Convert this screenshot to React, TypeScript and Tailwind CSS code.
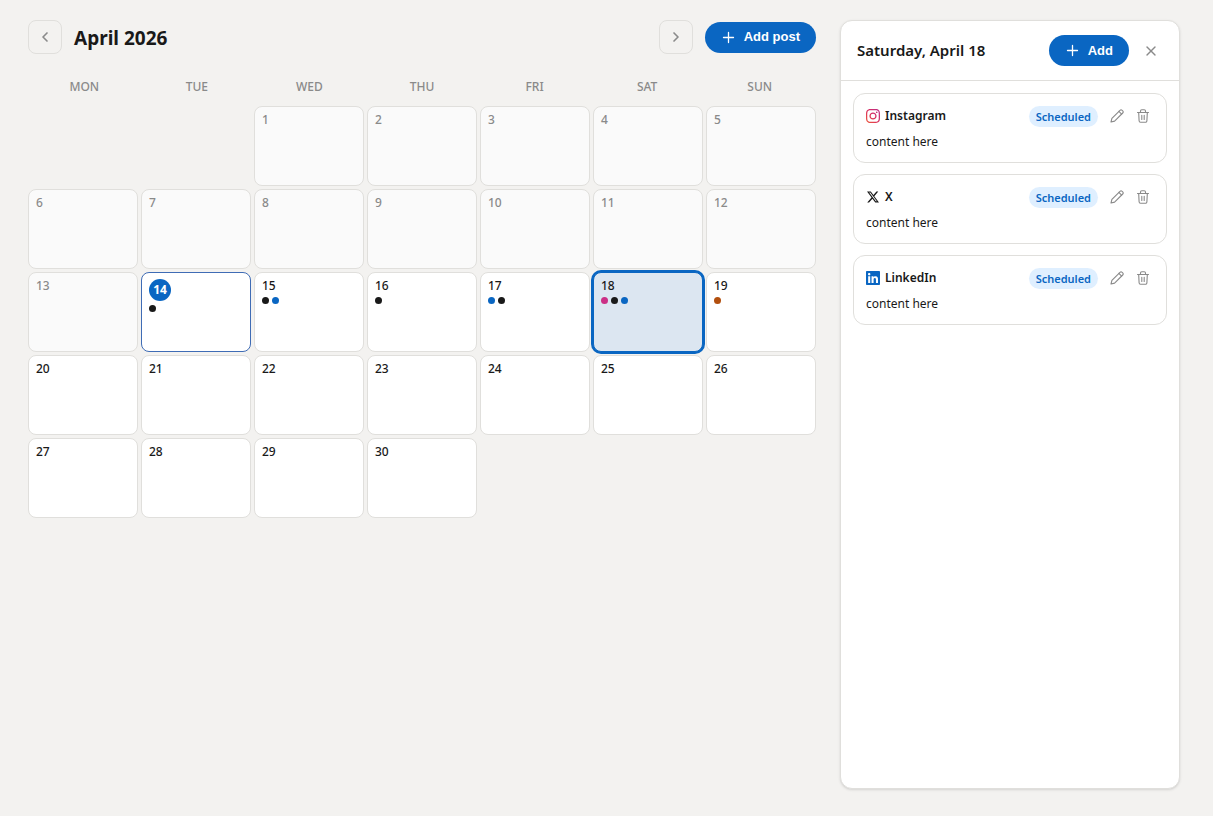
import { useState } from "react";
import { ChevronLeft, ChevronRight, X } from "lucide-react";
import { FaLinkedin } from "react-icons/fa";
import { SiInstagram, SiX } from "react-icons/si";

type Platform = "instagram" | "x" | "linkedin" | "other";

type Post = { platform: Platform; text: string };

const weekdays = ["Mon", "Tue", "Wed", "Thu", "Fri", "Sat", "Sun"];

const today = 14;
const leadingBlanks = 2;
const daysInMonth = 30;

const platformNames: Record<Platform, string> = {
  instagram: "Instagram",
  x: "X",
  linkedin: "LinkedIn",
  other: "Other",
};

const dotColors: Record<Platform, string> = {
  instagram: "bg-[#cb2f86]",
  x: "bg-[#191919]",
  linkedin: "bg-[#0a66c2]",
  other: "bg-[#b24f0e]",
};

const post = (platform: Platform): Post => ({ platform, text: "content here" });

const posts: Record<number, Post[]> = {
  14: [post("x")],
  15: [post("x"), post("linkedin")],
  16: [post("x")],
  17: [post("linkedin"), post("x")],
  18: [post("instagram"), post("x"), post("linkedin")],
  19: [post("other")],
};

function dayName(day: number) {
  return new Date(2026, 3, day).toLocaleDateString("en-US", { weekday: "long", month: "long", day: "numeric" });
}

function PlatformIcon({ platform }: { platform: Platform }) {
  if (platform === "instagram") {
    return (
      <>
        <svg width="0" height="0" className="absolute" aria-hidden="true">
          <linearGradient id="instagram-fill" x1="0" y1="1" x2="1" y2="0">
            <stop offset="0" stopColor="#ee5a3a" />
            <stop offset="0.5" stopColor="#d92e5f" />
            <stop offset="1" stopColor="#b9308c" />
          </linearGradient>
        </svg>
        <SiInstagram size={14} style={{ fill: "url(#instagram-fill)" }} />
      </>
    );
  }
  if (platform === "x") return <SiX size={14} className="p-px text-[#191919]" />;
  if (platform === "linkedin") return <FaLinkedin size={16} className="-mx-px text-[#0a66c2]" />;
  return <span className="size-3 rounded-full bg-[#b24f0e]" />;
}

function PlusIcon() {
  return (
    <svg width="15" height="15" viewBox="0 0 15 15" stroke="currentColor" strokeWidth="1.3" strokeLinecap="round" aria-hidden="true">
      <path d="M7.5 2.500v10M2.500 7.500h10" />
    </svg>
  );
}

function PencilIcon() {
  return (
    <svg width="14" height="14" viewBox="0 0 14 14" fill="none" stroke="currentColor" strokeWidth="1.1" strokeLinecap="round" strokeLinejoin="round" aria-hidden="true">
      <path d="M1 13l.9-3.600L10 1.300a1.500 1.500 0 0 1 2.100 0l.6.6a1.500 1.500 0 0 1 0 2.100L4.600 12.100z" />
      <path d="M8.900 2.400l2.700 2.700" />
    </svg>
  );
}

function TrashIcon() {
  return (
    <svg width="14" height="14" viewBox="0 0 14 14" fill="none" stroke="currentColor" strokeWidth="1.1" strokeLinecap="round" strokeLinejoin="round" aria-hidden="true">
      <path d="M1.500 3.500h11M4.500 3.300V2A1.300 1.300 0 0 1 5.800.7h2.400A1.300 1.300 0 0 1 9.500 2v1.300" />
      <path d="M2.700 3.700l.4 8.100a1.500 1.500 0 0 0 1.500 1.500h4.800a1.500 1.500 0 0 0 1.500-1.500l.4-8.100M5.800 6.200v4.300M8.200 6.200v4.300" />
    </svg>
  );
}

function AddButton({ label }: { label: string }) {
  return (
    <button className="flex h-[31px] items-center gap-2 rounded-full bg-[#0a66c2] px-4 font-['Liberation_Sans',Arial,sans-serif] text-[13px] font-bold text-white">
      <PlusIcon />
      {label}
    </button>
  );
}

function DayCell({ day, selected, onSelect }: { day: number; selected: boolean; onSelect: () => void }) {
  const tone = selected
    ? "border-[#0a66c2] bg-[#dce6f1] ring-2 ring-[#0a66c2]"
    : day === today
      ? "border-[#3f6cb5] bg-white"
      : day < today
        ? "border-[#e0dfdc] bg-[#fafafa]"
        : "border-[#e0dfdc] bg-white";

  return (
    <button
      onClick={onSelect}
      aria-label={dayName(day)}
      aria-pressed={selected}
      className={`flex h-20 flex-col items-start gap-1 rounded-lg border px-[7px] py-1.5 text-left ${tone}`}
    >
      {day === today ? (
        <span className="flex size-[22px] items-center justify-center rounded-full bg-[#0a66c2] text-xs font-bold text-white">{day}</span>
      ) : (
        <span className={`text-xs leading-[14px] font-medium ${day < today ? "text-[#8a8a8a]" : "text-[#191919]"}`}>{day}</span>
      )}
      <span className="flex gap-[3px]">
        {(posts[day] ?? []).map((item) => (
          <span key={item.platform} className={`size-[7px] rounded-full ${dotColors[item.platform]}`} />
        ))}
      </span>
    </button>
  );
}

function PostCard({ item }: { item: Post }) {
  return (
    <li className="rounded-xl border border-[#e0dfdc] bg-white p-3">
      <div className="flex h-5 items-center gap-2">
        <div className="flex flex-1 items-center gap-[5px]">
          <PlatformIcon platform={item.platform} />
          <h3 className="text-xs font-semibold">{platformNames[item.platform]}</h3>
        </div>
        <span className="rounded-full bg-[#dfefff] px-[7px] text-[11px] leading-[21px] font-semibold text-[#0a66c2]">Scheduled</span>
        <div className="flex gap-1 text-[#8a8a8a]">
          <button aria-label="Edit post" className="flex size-[22px] items-center justify-center">
            <PencilIcon />
          </button>
          <button aria-label="Delete post" className="flex size-[22px] items-center justify-center">
            <TrashIcon />
          </button>
        </div>
      </div>
      <p className="mt-2 text-xs leading-4">{item.text}</p>
    </li>
  );
}

export default function App() {
  const [selected, setSelected] = useState<number | null>(18);
  const days = Array.from({ length: daysInMonth }, (_, i) => i + 1);

  return (
    <main className="flex min-h-screen gap-6 bg-[#f3f2f0] pt-5 pr-[33px] pb-[27px] pl-7 font-['Noto_Sans','Open_Sans',sans-serif] text-[#191919]">
      <section className="min-w-0 flex-1">
        <header className="flex items-center">
          <button aria-label="Previous month" className="flex size-[34px] items-center justify-center rounded-lg border border-[#e0dfdc] text-[#8a8a8a]">
            <ChevronLeft size={16} strokeWidth={2.5} />
          </button>
          <h1 className="ml-3 flex-1 pt-0.5 text-[19px] font-bold">April 2026</h1>
          <button aria-label="Next month" className="mr-3 flex size-[34px] items-center justify-center rounded-lg border border-[#e0dfdc] text-[#8a8a8a]">
            <ChevronRight size={16} strokeWidth={2.5} />
          </button>
          <AddButton label="Add post" />
        </header>

        <div className="mt-[25px] grid grid-cols-7 text-center text-xs leading-4 font-medium text-[#8a8a8a] uppercase">
          {weekdays.map((name) => (
            <span key={name}>{name}</span>
          ))}
        </div>

        <div className="mt-[11px] grid grid-cols-7 gap-[3px]">
          {Array.from({ length: leadingBlanks }, (_, i) => (
            <span key={`blank-${i}`} />
          ))}
          {days.map((day) => (
            <DayCell key={day} day={day} selected={day === selected} onSelect={() => setSelected(day)} />
          ))}
        </div>
      </section>

      {selected !== null && (
        <aside className="w-[340px] shrink-0 rounded-xl border border-[#e0dfdc] bg-white shadow-sm">
          <header className="flex h-[60px] items-center border-b border-[#e0dfdc] px-4">
            <h2 className="flex-1 text-[15px] font-semibold">{dayName(selected)}</h2>
            <AddButton label="Add" />
            <button aria-label="Close" onClick={() => setSelected(null)} className="ml-2.5 flex size-6 items-center justify-center text-[#8a8a8a]">
              <X size={16} strokeWidth={2} />
            </button>
          </header>
          <ul className="flex flex-col gap-[11px] p-3">
            {(posts[selected] ?? []).map((item) => (
              <PostCard key={item.platform} item={item} />
            ))}
          </ul>
        </aside>
      )}
    </main>
  );
}
